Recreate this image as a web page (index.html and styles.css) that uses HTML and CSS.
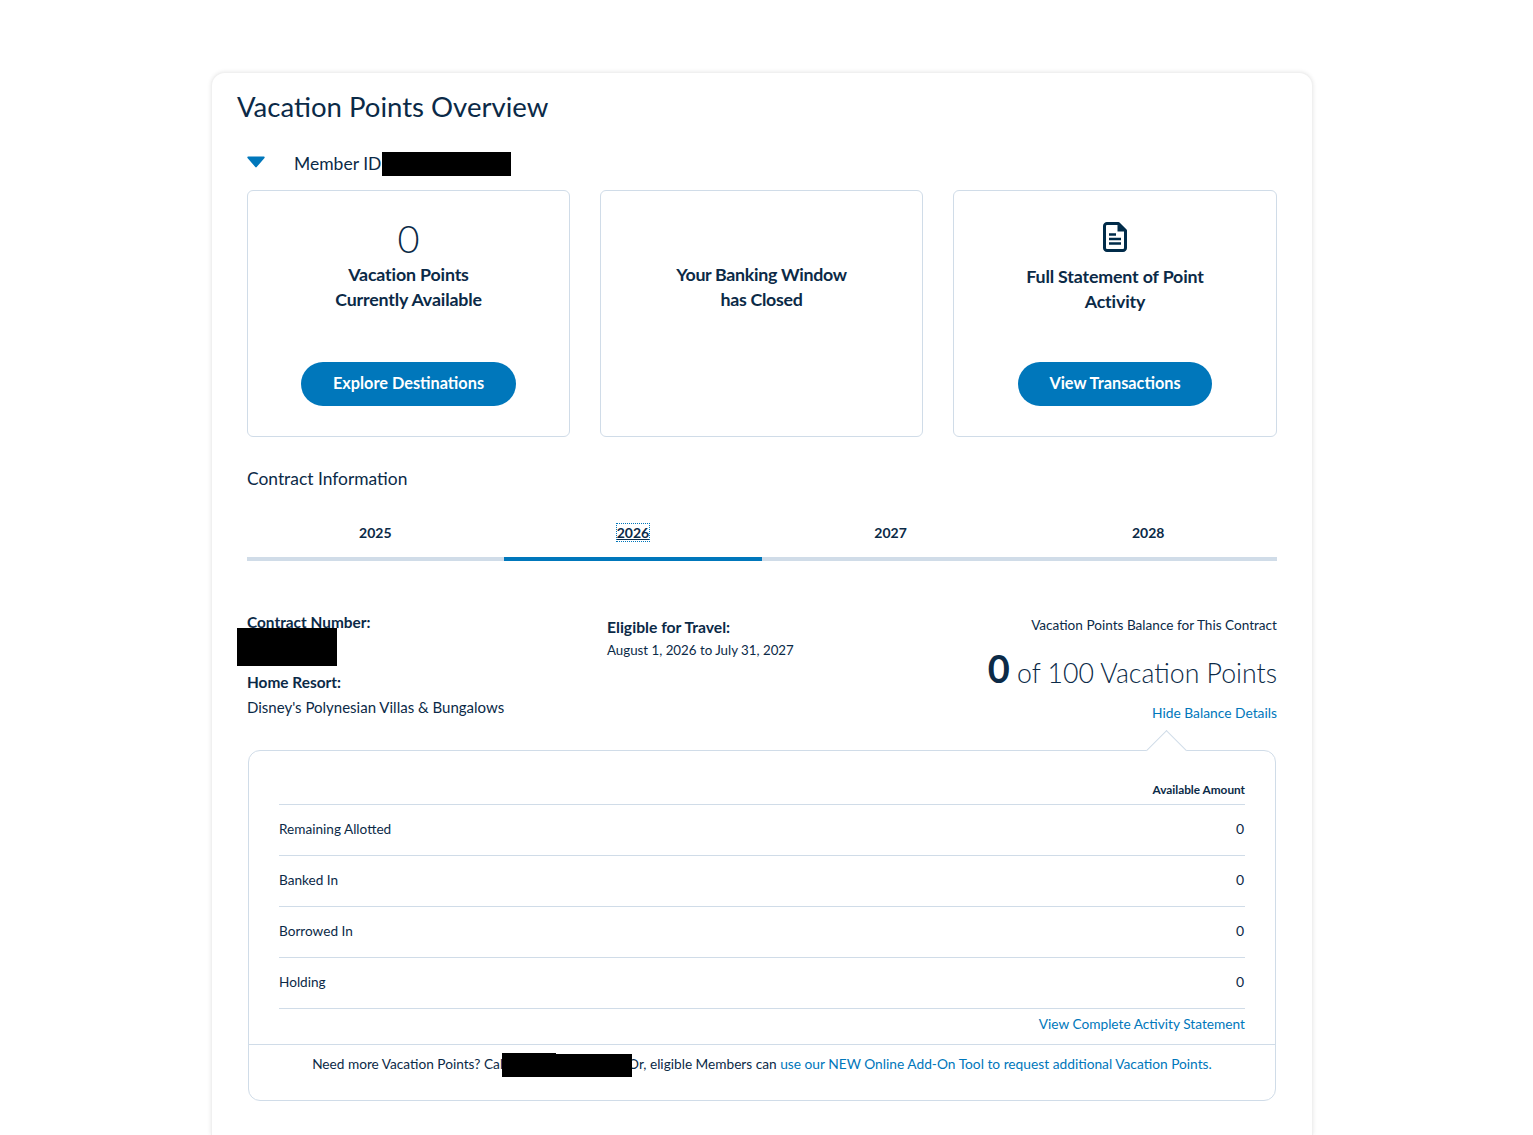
FILE: index.html
```html
<!DOCTYPE html>
<html lang="en">
<head>
<meta charset="utf-8">
<title>Vacation Points Overview</title>
<link rel="stylesheet" href="styles.css">
</head>
<body>
<main class="card">
  <h1 class="title">Vacation Points Overview</h1>
  <div class="content">
    <div class="member">
      <svg class="caret" width="18" height="12" viewBox="0 0 18 12"><path d="M1.2 0.5h15.6c.8 0 1.2.8.7 1.4L9.7 11c-.4.5-1 .5-1.4 0L.5 1.9C0 1.3.4.5 1.2.5z"/></svg>
      <span class="member-label">Member ID</span><span class="redact member-redact"></span>
    </div>
    <section class="tiles">
      <div class="tile">
        <div class="tile-num">0</div>
        <div class="tile-text">Vacation Points<br>Currently Available</div>
        <a class="btn btn-explore" href="#">Explore Destinations</a>
      </div>
      <div class="tile">
        <div class="tile-text tile-text-plain">Your Banking Window<br>has Closed</div>
      </div>
      <div class="tile">
        <svg class="doc" width="24" height="30" viewBox="0 0 24 30"><path d="M3.500 1.500h12L22.500 8.500V26a2.500 2.500 0 0 1-2.500 2.500H4A2.500 2.500 0 0 1 1.500 26V4A2.500 2.500 0 0 1 4 1.500z" fill="none" stroke="#002b49" stroke-width="3" stroke-linejoin="round"/><path d="M14.500 2v7.500h8z" fill="#002b49"/><path d="M6 12.500h7M6 17h12M6 21.500h12" stroke="#002b49" stroke-width="2.400" fill="none"/></svg>
        <div class="tile-text tile-text-doc">Full Statement of Point<br>Activity</div>
        <a class="btn btn-view" href="#">View Transactions</a>
      </div>
    </section>
    <h2 class="contract-head">Contract Information</h2>
    <nav class="tabs">
      <a class="tab" href="#">2025</a>
      <a class="tab tab-active" href="#"><span class="tab-focus">2026</span></a>
      <a class="tab" href="#">2027</a>
      <a class="tab" href="#">2028</a>
    </nav>
    <section class="info">
      <div class="info-left">
        <div class="label">Contract Number:</div>
        <div class="contract-gap"></div>
        <span class="redact contract-redact"></span>
        <div class="label">Home Resort:</div>
        <div class="value value-resort">Disney's Polynesian Villas &amp; Bungalows</div>
      </div>
      <div class="info-mid">
        <div class="label">Eligible for Travel:</div>
        <div class="value value-dates">August 1, 2026 to July 31, 2027</div>
      </div>
      <div class="info-right">
        <div class="balance-head">Vacation Points Balance for This Contract</div>
        <div class="balance"><strong class="balance-num">0</strong> of 100 Vacation Points</div>
        <a class="link hide-link" href="#">Hide Balance Details</a>
      </div>
    </section>
    <section class="panel">
      <span class="pointer"></span>
      <div class="table">
        <div class="thead">Available Amount</div>
        <div class="row"><span>Remaining Allotted</span><span class="amt">0</span></div>
        <div class="row"><span>Banked In</span><span class="amt">0</span></div>
        <div class="row"><span>Borrowed In</span><span class="amt">0</span></div>
        <div class="row"><span>Holding</span><span class="amt">0</span></div>
        <div class="statement"><a class="link" href="#">View Complete Activity Statement</a></div>
      </div>
      <div class="panel-foot">
        <span class="foot-text">Need more Vacation Points? Cal<span class="redact foot-redact"><span class="redact foot-notch"></span></span>Or, eligible Members can <a class="link foot-link" href="#">use our NEW Online Add-On Tool to request additional Vacation Points.</a></span>
      </div>
    </section>
  </div>
</main>
</body>
</html>
```
FILE: styles.css
```css
* { box-sizing: border-box; }
html, body { margin: 0; padding: 0; height: 1135px; overflow: hidden; background: #fff; }
body { font-family: Lato, "Open Sans", sans-serif; color: #0b2a47; }
a { text-decoration: none; }
.link { color: #0077bb; }
.redact { background: #000; display: inline-block; }

.card { width: 1102px; height: 1063px; margin: 72px 0 0 211px; padding: 0 35px 0 25px; border: 1px solid #f0f0f0; border-radius: 14px 14px 0 0; border-bottom: 0; box-shadow: 0 0 4px rgba(0,0,0,.1); background: #fff; overflow: visible; }
.title { margin: 0; padding-top: 16px; font-size: 27.550px; line-height: 36px; font-weight: 400; letter-spacing: 0; }
.content { margin-left: 10px; width: 1030px; }

.member { display: flex; align-items: center; height: 24px; margin-top: 27px; position: relative; }
.caret { fill: #0077bb; margin-top: -4px; display: block; }
.member-label { margin-left: 29px; font-size: 17.500px; margin-top: -1px; }
.member-redact { width: 129px; height: 24px; margin-left: 1px; }

.tiles { display: grid; grid-template-columns: 323px 323px 324px; gap: 30px; margin-top: 14px; }
.tile { height: 247px; border: 1px solid #d0dce8; border-radius: 6px; display: flex; flex-direction: column; align-items: center; position: relative; }
.tile-num { font-size: 38px; line-height: 44px; margin-top: 25px; font-weight: 300; }
.tile-text { font-size: 17.800px; line-height: 25px; font-weight: 700; text-align: center; margin-top: 2px; letter-spacing: -.15px; }
.tile-text-plain { margin-top: 71px; letter-spacing: -.3px; }
.tile-text-doc { margin-top: 12px; }
.doc { margin-top: 31px; display: block; }
.btn { position: absolute; top: 171px; height: 44px; border-radius: 22px; background: #0077bb; color: #fff; font-weight: 700; font-size: 16.300px; line-height: 42px; text-align: center; }
.btn-explore { width: 215px; }
.btn-view { width: 194px; }

.contract-head { margin: 30px 0 0; font-size: 17.400px; line-height: 24px; font-weight: 400; }
.tabs { display: grid; grid-template-columns: repeat(4, 1fr); margin: 22px 0 0 -.5px; }
.tab { height: 48px; padding-top: 10px; border-bottom: 4px solid #d0dce8; text-align: center; color: #0b2a47; font-size: 14px; line-height: 20px; font-weight: 700; }
.tab-active { border-bottom-color: #0077bb; }
.tab-focus { text-decoration: underline; outline: 1px dotted #0077bb; display: inline-block; line-height: 17px; }

.info { display: flex; height: 140px; margin-top: 50px; position: relative; }
.label { font-size: 15.400px; line-height: 22px; font-weight: 700; }
.value { font-size: 15px; line-height: 20px; margin-top: 3px; font-weight: 400; }
.value-dates { font-size: 13.300px; margin-top: 2px; }
.value-resort { margin-top: 4px; }
.info-left { width: 360px; position: relative; }
.contract-gap { height: 38px; }
.contract-redact { position: absolute; left: -10px; top: 17px; width: 100px; height: 38px; }
.info-mid { width: 340px; padding-top: 5px; }
.info-mid .label { font-size: 15.700px; }
.info-right { flex: 1; text-align: right; padding-top: 4px; }
.balance-head { font-size: 13.600px; line-height: 20px; }
.balance { height: 44px; font-size: 26.700px; line-height: 44px; margin-top: 11px; font-weight: 300; }
.balance-num { font-size: 38px; font-weight: 700; }
.hide-link { display: block; font-size: 13.800px; line-height: 20px; margin-top: 13px; }

.panel { margin: -1px 1px 0; height: 351px; border: 1px solid #d0dce8; border-radius: 12px; position: relative; background: #fff; }
.pointer { position: absolute; right: 94px; top: -15px; width: 29px; height: 29px; background: #fff; border-top: 1px solid #d0dce8; border-left: 1px solid #d0dce8; transform: rotate(45deg); }
.table { padding: 0 30px; position: relative; }
.thead { height: 54px; padding-top: 31px; text-align: right; font-size: 11.800px; line-height: 16px; font-weight: 700; border-bottom: 1px solid #d0dce8; }
.row { display: flex; justify-content: space-between; align-items: center; height: 51px; padding-bottom: 2px; border-bottom: 1px solid #d0dce8; font-size: 13.600px; }
.amt { padding: 0 1px 2px 0; font-size: 14px; }
.statement { text-align: right; font-size: 13.700px; line-height: 20px; padding-top: 5px; height: 35px; }
.panel-foot { border-top: 1px solid #d0dce8; text-align: center; padding-top: 9px; font-size: 13.660px; line-height: 20px; color: #0b2a47; }
.foot-link { font-size: 13.750px; }
.foot-redact { width: 130px; height: 23px; vertical-align: middle; position: relative; margin: 0 -4px 1px -1px; }
.foot-notch { position: absolute; left: 0; top: -1px; width: 54px; height: 1px; }
```
